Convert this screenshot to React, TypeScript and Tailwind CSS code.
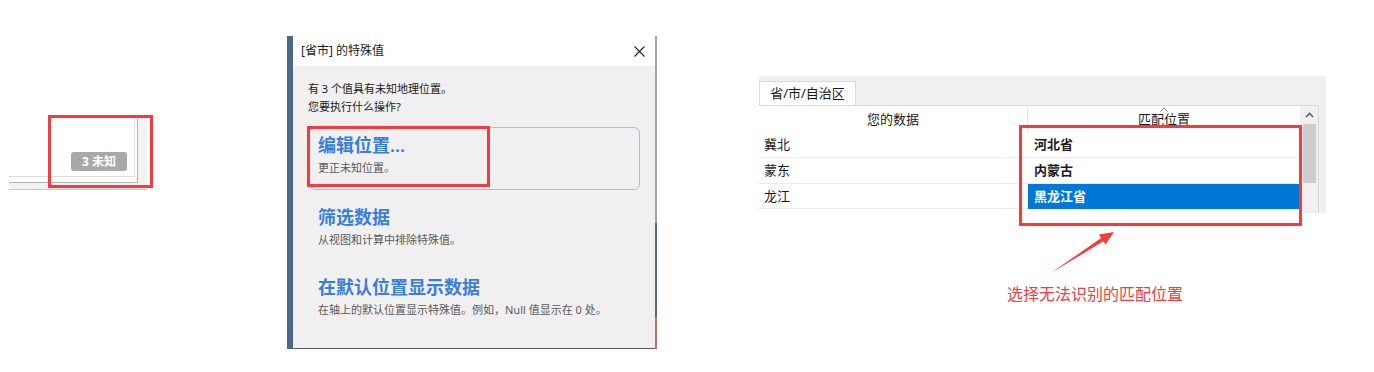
export default function App() {
  return (
    <div className="w-[1374px] h-[372px] bg-white flex items-start overflow-hidden font-['Noto_Sans','Noto_Sans_CJK_SC',sans-serif] text-[#1a1a1a]">
      {/* map corner with unknown badge */}
      <div className="relative ml-[9px] mt-[117px] w-[138px]">
        <div className="bg-[#f2f2f2] border-b border-[#c8c8c8] pr-[9px] pb-[6px]">
          <div className="bg-white border-r border-b border-[#b4b4b4] pr-[2px] pb-[5px]">
            <div className="h-[60px] border-r border-b border-[#dcdcdc] flex justify-end items-end pr-[7px] pb-[5px]">
              <div className="w-[56px] h-[19px] rounded-[3px] bg-[#a9a9a9] text-white text-[12px] font-bold leading-[19px] text-center">
                3 未知
              </div>
            </div>
          </div>
        </div>
        <div className="absolute left-[39px] top-[-2px] w-[105px] h-[73px] border-[3px] border-[#f53b3b]" />
      </div>

      {/* special values dialog */}
      <div className="relative ml-[140px] mt-[36px] flex h-[313px]">
        <div className="w-[6px] bg-[#4b6889]" />
        <div className="w-[362px] flex flex-col border-b border-[#5a5a5a]">
          <div className="h-[30px] bg-white flex items-center justify-between pl-[8px] pr-[10px]">
            <span className="text-[12px] leading-[16px]">[省市] 的特殊值</span>
            <svg width="11" height="11" viewBox="0 0 11 11">
              <path d="M0.5 0.5 L10.5 10.5 M10.5 0.5 L0.5 10.5" stroke="#222" strokeWidth="1.1" />
            </svg>
          </div>
          <div className="flex-1 bg-[#f0f0f0] pl-[15px] pt-[14px]">
            <p className="text-[11px] leading-[18px]">有 3 个值具有未知地理位置。</p>
            <p className="text-[11px] leading-[18px]">您要执行什么操作?</p>

            <div className="mt-[11px] ml-[1px] w-[331px] h-[63px] rounded-[6px] border border-[#9ec2f5] pl-[8px] pt-[6px]">
              <div className="text-[18px] leading-[23px] font-semibold text-[#3b7ddd]">编辑位置...</div>
              <div className="mt-[3px] text-[11px] leading-[16px] text-[#5a5a5a]">更正未知位置。</div>
            </div>

            <div className="mt-[9px] ml-[1px] w-[331px] h-[63px] rounded-[6px] border border-transparent pl-[8px] pt-[6px]">
              <div className="text-[18px] leading-[23px] font-semibold text-[#3b7ddd]">筛选数据</div>
              <div className="mt-[3px] text-[11px] leading-[16px] text-[#5a5a5a]">从视图和计算中排除特殊值。</div>
            </div>

            <div className="mt-[7px] ml-[1px] w-[331px] h-[63px] rounded-[6px] border border-transparent pl-[8px] pt-[6px]">
              <div className="text-[18px] leading-[23px] font-semibold text-[#3b7ddd]">在默认位置显示数据</div>
              <div className="mt-[3px] text-[11px] leading-[16px] text-[#5a5a5a]">在轴上的默认位置显示特殊值。例如，Null 值显示在 0 处。</div>
            </div>
          </div>
        </div>
        <div className="w-[2px] flex flex-col">
          <div className="h-[187px] bg-[#a3a3a3]" />
          <div className="h-[94px] bg-[#4d6a8a]" />
          <div className="flex-1 bg-[#b87565]" />
        </div>
        <div className="absolute left-[20px] top-[90px] w-[183px] h-[61px] border-[3px] border-[#f53b3b]" />
      </div>

      {/* matching table */}
      <div className="relative ml-[102px] mt-[76px] w-[567px]">
        <div className="bg-[#f0f0f0]">
          <div className="h-[30px] pt-[5px] flex items-end">
            <div className="w-[97px] h-[25px] bg-white border-t border-l border-r border-[#d9d9d9] text-[13px] leading-[23px] text-center">
              省/市/自治区
            </div>
            <div className="flex-1 h-full" />
          </div>
          <div className="flex">
            <div className="flex-1 flex bg-white border-r border-t border-[#d9d9d9] -mt-px">
              <div className="flex-1 flex flex-col pt-px">
                <div className="h-[25px] flex text-[13px] leading-[25px]">
                  <div className="w-[269px] text-center border-r border-[#e5e5e5]">您的数据</div>
                  <div className="relative flex-1 text-center">
                    匹配位置
                    <svg className="absolute left-1/2 top-0 -translate-x-1/2" width="8" height="5" viewBox="0 0 8 5">
                      <path d="M0.5 4.5 L4 1 L7.5 4.5" stroke="#777" strokeWidth="1" fill="none" />
                    </svg>
                  </div>
                </div>
                <div className="h-[26px] flex text-[13px] leading-[25px]">
                  <div className="w-[269px] pl-[5px] border-b border-[#ebebeb]">冀北</div>
                  <div className="flex-1 pl-[6px] font-bold border-b border-[#ebebeb]">河北省</div>
                </div>
                <div className="h-[26px] flex text-[13px] leading-[25px]">
                  <div className="w-[269px] pl-[5px] border-b border-[#ebebeb]">蒙东</div>
                  <div className="flex-1 pl-[6px] font-bold border-b border-[#ebebeb]">内蒙古</div>
                </div>
                <div className="h-[25px] flex text-[13px] leading-[24px]">
                  <div className="w-[269px] pl-[5px] border-b border-[#ebebeb]">龙江</div>
                  <div className="flex-1 pl-[6px] font-bold bg-[#0078d7] text-white">黑龙江省</div>
                </div>
                <div className="h-[4px]" />
              </div>
              <div className="w-[18px] bg-[#f0f0f0] flex flex-col items-center">
                <div className="h-[18px] flex items-center justify-center">
                  <svg width="9" height="6" viewBox="0 0 9 6">
                    <path d="M1 5 L4.5 1.5 L8 5" stroke="#606060" strokeWidth="1.6" fill="none" />
                  </svg>
                </div>
                <div className="w-[13px] h-[59px] bg-[#cdcdcd]" />
              </div>
            </div>
            <div className="w-[7px]" />
          </div>
        </div>

        <div className="mt-[70px] ml-[248px] text-[16px] leading-[22px] text-[#f23c3c]">选择无法识别的匹配位置</div>

        <div className="absolute left-[260px] top-[49px] w-[283px] h-[101px] border-[3px] border-[#f53b3b]" />
        <svg className="absolute left-[285px] top-[150px]" width="75" height="52" viewBox="0 0 75 52">
          <polygon
            points="7,47 59.4,15.3 61.6,18.6 70,6 55,8.6 57.2,11.9"
            fill="#f53b3b"
          />
        </svg>
      </div>
    </div>
  );
}
